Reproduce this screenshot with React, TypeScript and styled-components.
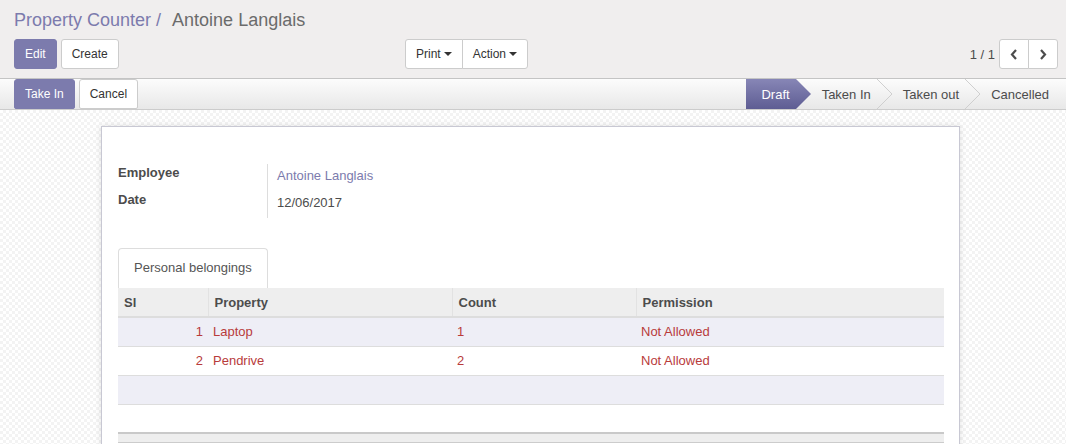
import styled, { createGlobalStyle, css } from "styled-components";

const GlobalStyle = createGlobalStyle`
  *, *::before, *::after {
    box-sizing: border-box;
  }
  html, body {
    margin: 0;
    padding: 0;
    height: 444px;
    overflow: hidden;
    font-family: "Liberation Sans", Arial, sans-serif;
    font-size: 13px;
    color: #4c4c4c;
  }
`;

const primary = "#7c7bad";

const Page = styled.div`
  width: 1066px;
  height: 444px;
  display: flex;
  flex-direction: column;
  overflow: hidden;
`;

const ControlPanel = styled.div`
  background: #f0eeee;
  border-bottom: 1px solid #c4c4c4;
  padding: 7px 8px 9px 14px;
`;

const Breadcrumb = styled.div`
  font-size: 18px;
  line-height: 26px;
  height: 26px;
  display: flex;
  gap: 11px;
`;

const CrumbLink = styled.span`
  color: ${primary};
`;

const CrumbActive = styled.span`
  color: #6b6b6b;
`;

const CpRow = styled.div`
  margin-top: 6px;
  display: grid;
  grid-template-columns: 391px 1fr auto;
  align-items: center;
`;

const ButtonGroup = styled.div<{ $gap?: number }>`
  display: flex;
  gap: ${(p) => p.$gap ?? 0}px;
`;

const Button = styled.button<{ $primary?: boolean }>`
  height: 30px;
  padding: 5px 10px;
  font-family: inherit;
  font-size: 12px;
  line-height: 18px;
  border-radius: 3px;
  border: 1px solid ${(p) => (p.$primary ? primary : "#cccccc")};
  background: ${(p) => (p.$primary ? primary : "#ffffff")};
  color: ${(p) => (p.$primary ? "#ffffff" : "#333333")};
  display: flex;
  align-items: center;
  cursor: pointer;
`;

const GroupButton = styled(Button)<{ $pos: "first" | "last" }>`
  ${(p) =>
    p.$pos === "first"
      ? css`
          border-top-right-radius: 0;
          border-bottom-right-radius: 0;
        `
      : css`
          border-top-left-radius: 0;
          border-bottom-left-radius: 0;
          margin-left: -1px;
        `}
`;

const Caret = styled.span`
  display: inline-block;
  margin-left: 3px;
  width: 0;
  height: 0;
  border-top: 4px solid #333;
  border-left: 4px solid transparent;
  border-right: 4px solid transparent;
`;

const Pager = styled.div`
  display: flex;
  align-items: center;
  gap: 4px;
`;

const PagerValue = styled.span`
  font-size: 13px;
  color: #4c4c4c;
`;

const PagerButton = styled(GroupButton)`
  width: 30px;
  justify-content: center;
  padding: 0;
`;

const StatusBar = styled.div`
  height: 31px;
  border-bottom: 1px solid #cccccc;
  background: linear-gradient(#fcfcfc, #e8e8e8);
  padding: 0 8px 0 14px;
  display: flex;
  justify-content: space-between;
`;

const StatusButton = styled(Button)`
  font-size: 12px;
  height: 30px;
  border-bottom-left-radius: 2px;
  border-bottom-right-radius: 2px;
`;

const Steps = styled.div`
  display: flex;
  height: 30px;
`;

const Step = styled.div<{ $active?: boolean; $first?: boolean; $last?: boolean }>`
  display: flex;
  align-items: center;
  height: 30px;
  font-size: 13px;
  padding-left: ${(p) => (p.$first ? 15 : 11)}px;
  padding-right: ${(p) => (p.$last ? 3 : 0)}px;
  color: ${(p) => (p.$active ? "#ffffff" : "#4c4c4c")};
  ${(p) =>
    p.$active &&
    css`
      background: linear-gradient(#8786b6, #5e5d93) no-repeat;
      background-size: calc(100% - 15px) 100%;
    `}
`;

const StepLabel = styled.span`
  padding-right: 6px;
`;

const Arrow = styled.svg`
  display: block;
  flex: 0 0 15px;
`;

function StepArrow({ active }: { active?: boolean }) {
  return (
    <Arrow width="15" height="30" viewBox="0 0 15 30">
      <defs>
        <linearGradient id="stepgrad" x1="0" y1="0" x2="0" y2="1">
          <stop offset="0" stopColor="#8786b6" />
          <stop offset="1" stopColor="#5e5d93" />
        </linearGradient>
      </defs>
      {active ? (
        <polygon points="0,0 15,15 0,30" fill="url(#stepgrad)" />
      ) : (
        <polyline points="0,0 15,15 0,30" fill="none" stroke="#cfcfcf" strokeWidth="1" />
      )}
    </Arrow>
  );
}

const SheetBg = styled.div`
  flex: 1;
  background-color: #ffffff;
  background-image: conic-gradient(#f3f3f3 25%, #ffffff 0 50%, #f3f3f3 0 75%, #ffffff 0);
  background-size: 6px 6px;
  padding-top: 16px;
`;

const Sheet = styled.div`
  margin-left: 101px;
  width: 859px;
  min-height: 400px;
  background: #ffffff;
  border: 1px solid #c8c8d3;
  box-shadow: 0 0 6px rgba(0, 0, 0, 0.12);
  padding: 37px 16px 0 16px;
`;

const FieldGrid = styled.div`
  display: grid;
  grid-template-columns: 150px 1fr;
  grid-auto-rows: 27px;
  width: 500px;
`;

const FieldLabel = styled.div`
  font-weight: bold;
  line-height: 18px;
  border-right: 1px solid #dddddd;
`;

const FieldValue = styled.div<{ $link?: boolean }>`
  padding: 3px 0 0 9px;
  line-height: 18px;
  color: ${(p) => (p.$link ? primary : "#4c4c4c")};
`;

const Notebook = styled.div`
  margin-top: 30px;
`;

const TabList = styled.div`
  display: flex;
`;

const Tab = styled.div`
  padding: 10px 15px 11px 15px;
  line-height: 18px;
  font-size: 13px;
  color: #555555;
  border: 1px solid #dddddd;
  border-bottom: none;
  border-radius: 4px 4px 0 0;
  background: #ffffff;
`;

const Table = styled.table`
  width: 100%;
  border-collapse: collapse;
  table-layout: fixed;
  font-size: 13px;
`;

const HeadCell = styled.th<{ $width: number }>`
  width: ${(p) => p.$width}px;
  background: #eeeeee;
  text-align: left;
  font-weight: bold;
  height: 29px;
  padding: 0 6px;
  border-bottom: 2px solid #dddddd;
  border-left: 1px solid #e2e2e2;
  &:first-child {
    border-left: none;
  }
`;

const Row = styled.tr<{ $odd?: boolean }>`
  background: ${(p) => (p.$odd ? "#eeeef6" : "#ffffff")};
  border-bottom: 1px solid #dddddd;
`;

const Cell = styled.td<{ $right?: boolean }>`
  padding: 0 5px;
  color: #b83b3b;
  text-align: ${(p) => (p.$right ? "right" : "left")};
  height: 29px;
`;

const BlankRow = styled.tr`
  height: 29px;
  background: #ffffff;
`;

const FootCell = styled.td`
  height: 9px;
  padding: 0;
  background: #eeeeee;
  border-top: 2px solid #c9c9c9;
  border-bottom: 1px solid #cccccc;
`;

function ChevronIcon({ dir }: { dir: "left" | "right" }) {
  return (
    <svg width="8" height="11" viewBox="0 0 8 11">
      <polyline
        points={dir === "left" ? "6,1 2,5.5 6,10" : "2,1 6,5.5 2,10"}
        fill="none"
        stroke="#4c4c4c"
        strokeWidth="2.2"
      />
    </svg>
  );
}

const rows = [
  { sl: 1, property: "Laptop", count: 1, permission: "Not Allowed" },
  { sl: 2, property: "Pendrive", count: 2, permission: "Not Allowed" },
];

const steps = ["Draft", "Taken In", "Taken out", "Cancelled"];

export default function App() {
  return (
    <Page>
      <GlobalStyle />
      <ControlPanel>
        <Breadcrumb>
          <CrumbLink>Property Counter /</CrumbLink>
          <CrumbActive>Antoine Langlais</CrumbActive>
        </Breadcrumb>
        <CpRow>
          <ButtonGroup $gap={4}>
            <Button $primary>Edit</Button>
            <Button>Create</Button>
          </ButtonGroup>
          <ButtonGroup>
            <GroupButton $pos="first">
              Print <Caret />
            </GroupButton>
            <GroupButton $pos="last">
              Action <Caret />
            </GroupButton>
          </ButtonGroup>
          <Pager>
            <PagerValue>1 / 1</PagerValue>
            <ButtonGroup>
              <PagerButton $pos="first">
                <ChevronIcon dir="left" />
              </PagerButton>
              <PagerButton $pos="last">
                <ChevronIcon dir="right" />
              </PagerButton>
            </ButtonGroup>
          </Pager>
        </CpRow>
      </ControlPanel>

      <StatusBar>
        <ButtonGroup $gap={4}>
          <StatusButton $primary>Take In</StatusButton>
          <StatusButton>Cancel</StatusButton>
        </ButtonGroup>
        <Steps>
          {steps.map((s, i) => (
            <Step key={s} $active={i === 0} $first={i === 0} $last={i === steps.length - 1}>
              <StepLabel>{s}</StepLabel>
              {i < steps.length - 1 && <StepArrow active={i === 0} />}
            </Step>
          ))}
        </Steps>
      </StatusBar>

      <SheetBg>
        <Sheet>
          <FieldGrid>
            <FieldLabel>Employee</FieldLabel>
            <FieldValue $link>Antoine Langlais</FieldValue>
            <FieldLabel>Date</FieldLabel>
            <FieldValue>12/06/2017</FieldValue>
          </FieldGrid>

          <Notebook>
            <TabList>
              <Tab>Personal belongings</Tab>
            </TabList>
            <Table>
              <thead>
                <tr>
                  <HeadCell $width={90}>Sl</HeadCell>
                  <HeadCell $width={244}>Property</HeadCell>
                  <HeadCell $width={184}>Count</HeadCell>
                  <HeadCell $width={308}>Permission</HeadCell>
                </tr>
              </thead>
              <tbody>
                {rows.map((r, i) => (
                  <Row key={r.sl} $odd={i % 2 === 0}>
                    <Cell $right>{r.sl}</Cell>
                    <Cell>{r.property}</Cell>
                    <Cell>{r.count}</Cell>
                    <Cell>{r.permission}</Cell>
                  </Row>
                ))}
                <Row $odd>
                  <Cell colSpan={4} />
                </Row>
                <BlankRow>
                  <td colSpan={4} />
                </BlankRow>
              </tbody>
              <tfoot>
                <tr>
                  <FootCell colSpan={4} />
                </tr>
              </tfoot>
            </Table>
          </Notebook>
        </Sheet>
      </SheetBg>
    </Page>
  );
}
